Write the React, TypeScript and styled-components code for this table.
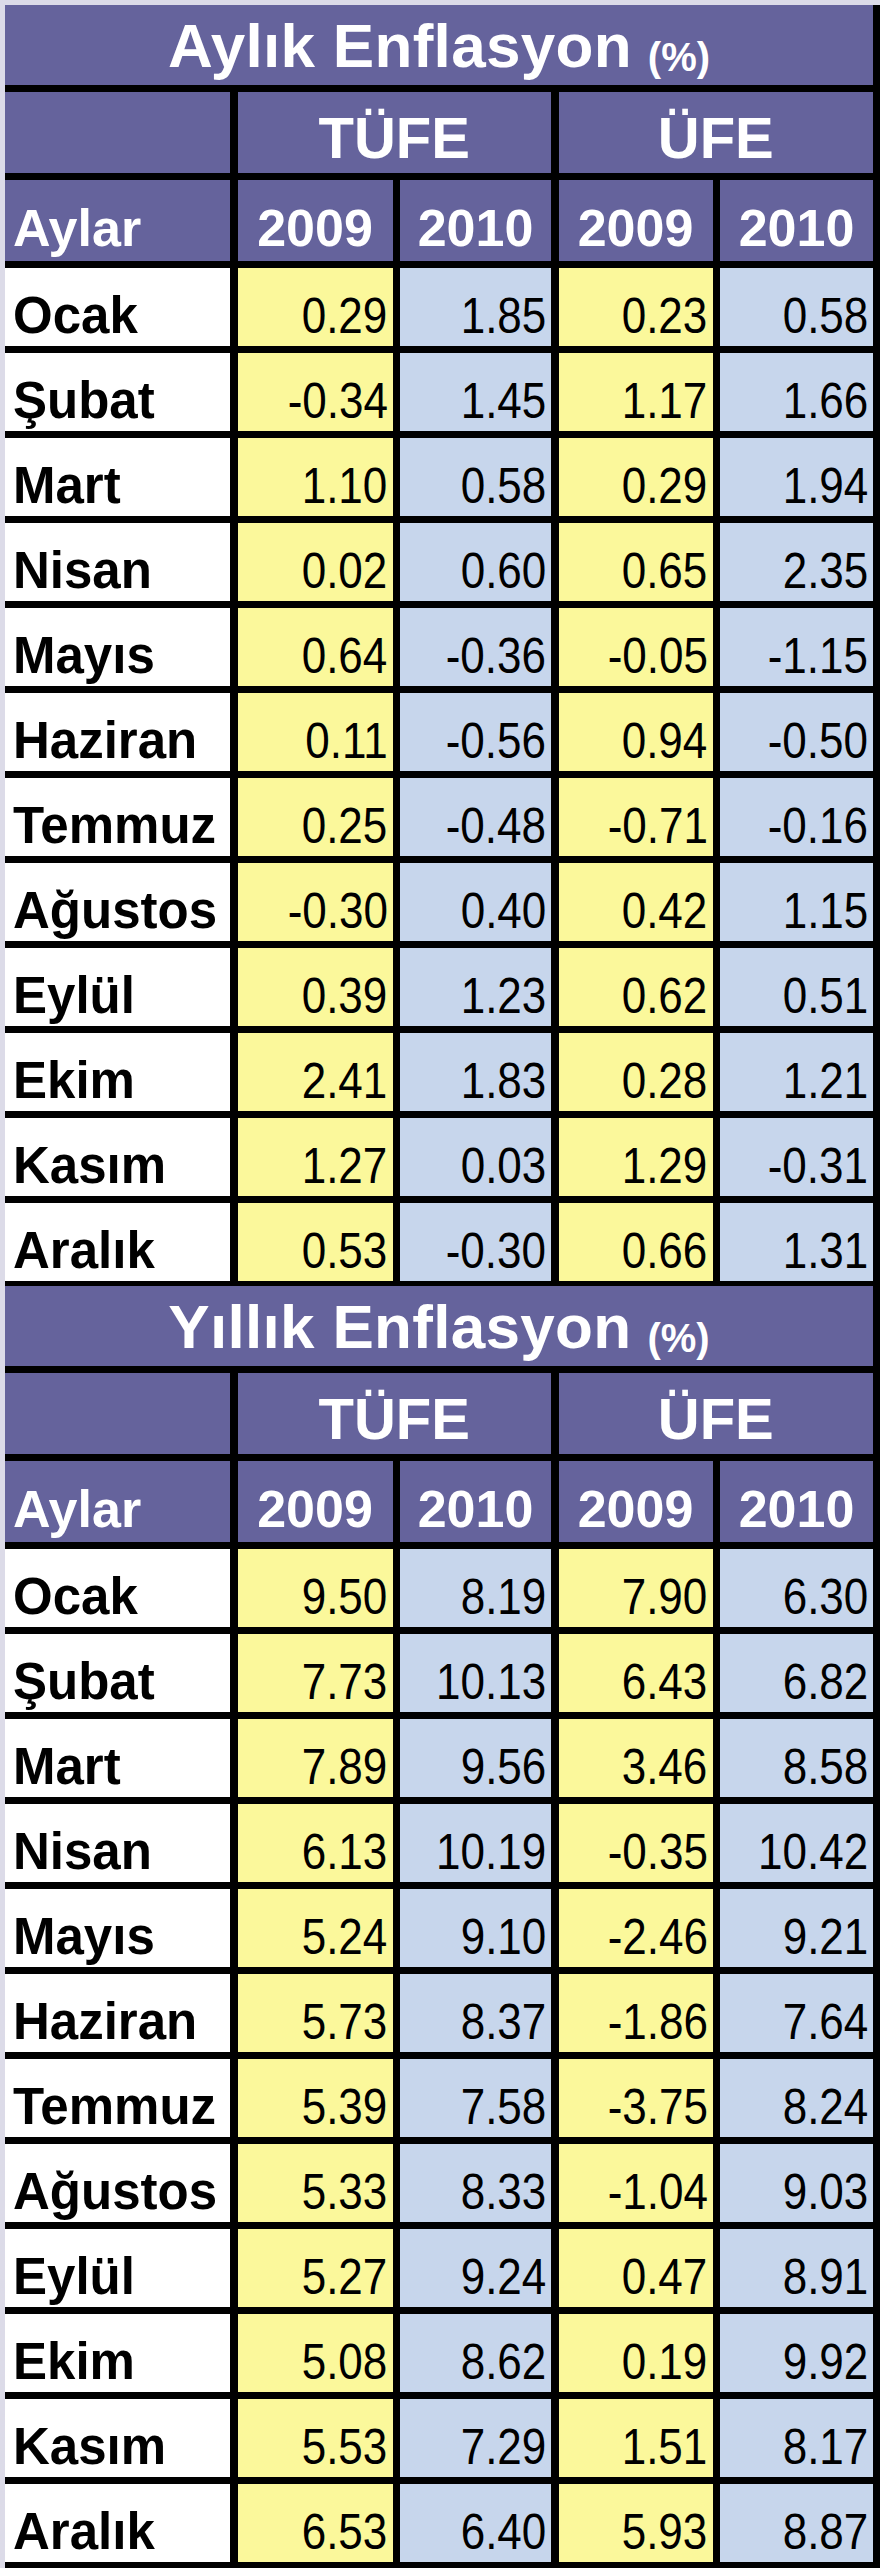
import React from "react";
import styled, { createGlobalStyle } from "styled-components";

const GlobalStyle = createGlobalStyle`
  html, body {
    margin: 0;
    padding: 0;
    background: #dcdbe8;
  }
  * { box-sizing: border-box; }
`;

const Page = styled.div`
  width: 880px;
  padding: 5px 0 0 5px;
  background: #dcdbe8;
  font-family: "Liberation Sans", Arial, sans-serif;
`;

const Sheet = styled.div`
  display: flex;
  flex-direction: column;
  gap: 5px;
  background: #000;
  padding: 0 7px 6px 0;
`;

const Block = styled.section`
  display: grid;
  grid-template-columns: 225px 155px 151px 154px 153px;
  grid-template-rows: 80px 81px 81px;
  grid-auto-rows: 78px;
  column-gap: 7.5px;
  row-gap: 7px;
`;

const Purple = "#65639c";

const TitleCell = styled.div`
  grid-column: 1 / -1;
  background: ${Purple};
  color: #fff;
  display: flex;
  align-items: flex-end;
  justify-content: center;
  padding-bottom: 8px;
  line-height: 1;
  white-space: nowrap;
`;

const TitleText = styled.span`
  font-size: 62px;
  font-weight: 700;
  letter-spacing: 0.3px;
`;

const Pct = styled.span`
  font-size: 40px;
  font-weight: 700;
  margin-left: 16px;
`;

const GroupCell = styled.div<{ $span: number }>`
  grid-column: span ${(p) => p.$span};
  background: ${Purple};
  color: #fff;
  display: flex;
  align-items: flex-end;
  justify-content: center;
  padding-bottom: 6px;
  font-size: 58px;
  font-weight: 700;
  line-height: 1;
`;

const HeadCell = styled.div<{ $align?: "left" | "center" }>`
  background: ${Purple};
  color: #fff;
  display: flex;
  align-items: flex-end;
  justify-content: ${(p) => (p.$align === "left" ? "flex-start" : "center")};
  padding: 0 0 7px ${(p) => (p.$align === "left" ? "8px" : "0")};
  font-size: 52px;
  font-weight: 700;
  line-height: 1;
`;

const MonthCell = styled.div`
  background: #fff;
  color: #000;
  display: flex;
  align-items: flex-end;
  padding: 0 0 5px 8px;
  font-size: 51px;
  font-weight: 700;
  line-height: 1;
  white-space: nowrap;
`;

const ValueCell = styled.div<{ $tone: "yellow" | "blue" }>`
  background: ${(p) => (p.$tone === "yellow" ? "#fbf89b" : "#c7d6ec")};
  color: #000;
  display: flex;
  align-items: flex-end;
  justify-content: flex-end;
  padding: 0 5px 5px 0;
  font-size: 50px;
  font-weight: 400;
  line-height: 1;
`;

const Num = styled.span`
  display: inline-block;
  transform: scaleX(0.88);
  transform-origin: right bottom;
  white-space: nowrap;
`;

type Row = [string, string, string, string, string];

const monthly: Row[] = [
  ["Ocak", "0.29", "1.85", "0.23", "0.58"],
  ["Şubat", "-0.34", "1.45", "1.17", "1.66"],
  ["Mart", "1.10", "0.58", "0.29", "1.94"],
  ["Nisan", "0.02", "0.60", "0.65", "2.35"],
  ["Mayıs", "0.64", "-0.36", "-0.05", "-1.15"],
  ["Haziran", "0.11", "-0.56", "0.94", "-0.50"],
  ["Temmuz", "0.25", "-0.48", "-0.71", "-0.16"],
  ["Ağustos", "-0.30", "0.40", "0.42", "1.15"],
  ["Eylül", "0.39", "1.23", "0.62", "0.51"],
  ["Ekim", "2.41", "1.83", "0.28", "1.21"],
  ["Kasım", "1.27", "0.03", "1.29", "-0.31"],
  ["Aralık", "0.53", "-0.30", "0.66", "1.31"],
];

const yearly: Row[] = [
  ["Ocak", "9.50", "8.19", "7.90", "6.30"],
  ["Şubat", "7.73", "10.13", "6.43", "6.82"],
  ["Mart", "7.89", "9.56", "3.46", "8.58"],
  ["Nisan", "6.13", "10.19", "-0.35", "10.42"],
  ["Mayıs", "5.24", "9.10", "-2.46", "9.21"],
  ["Haziran", "5.73", "8.37", "-1.86", "7.64"],
  ["Temmuz", "5.39", "7.58", "-3.75", "8.24"],
  ["Ağustos", "5.33", "8.33", "-1.04", "9.03"],
  ["Eylül", "5.27", "9.24", "0.47", "8.91"],
  ["Ekim", "5.08", "8.62", "0.19", "9.92"],
  ["Kasım", "5.53", "7.29", "1.51", "8.17"],
  ["Aralık", "6.53", "6.40", "5.93", "8.87"],
];

const tones: ("yellow" | "blue")[] = ["yellow", "blue", "yellow", "blue"];

function InflationTable({ title, rows }: { title: string; rows: Row[] }) {
  return (
    <Block>
      <TitleCell>
        <TitleText>{title}</TitleText>
        <Pct>(%)</Pct>
      </TitleCell>
      <GroupCell $span={1} />
      <GroupCell $span={2}>TÜFE</GroupCell>
      <GroupCell $span={2}>ÜFE</GroupCell>
      <HeadCell $align="left">Aylar</HeadCell>
      <HeadCell>2009</HeadCell>
      <HeadCell>2010</HeadCell>
      <HeadCell>2009</HeadCell>
      <HeadCell>2010</HeadCell>
      {rows.map(([month, ...vals]) => (
        <React.Fragment key={month}>
          <MonthCell>{month}</MonthCell>
          {vals.map((v, i) => (
            <ValueCell key={i} $tone={tones[i]}>
              <Num>{v}</Num>
            </ValueCell>
          ))}
        </React.Fragment>
      ))}
    </Block>
  );
}

export default function App() {
  return (
    <Page>
      <GlobalStyle />
      <Sheet>
        <InflationTable title="Aylık Enflasyon" rows={monthly} />
        <InflationTable title="Yıllık Enflasyon" rows={yearly} />
      </Sheet>
    </Page>
  );
}
